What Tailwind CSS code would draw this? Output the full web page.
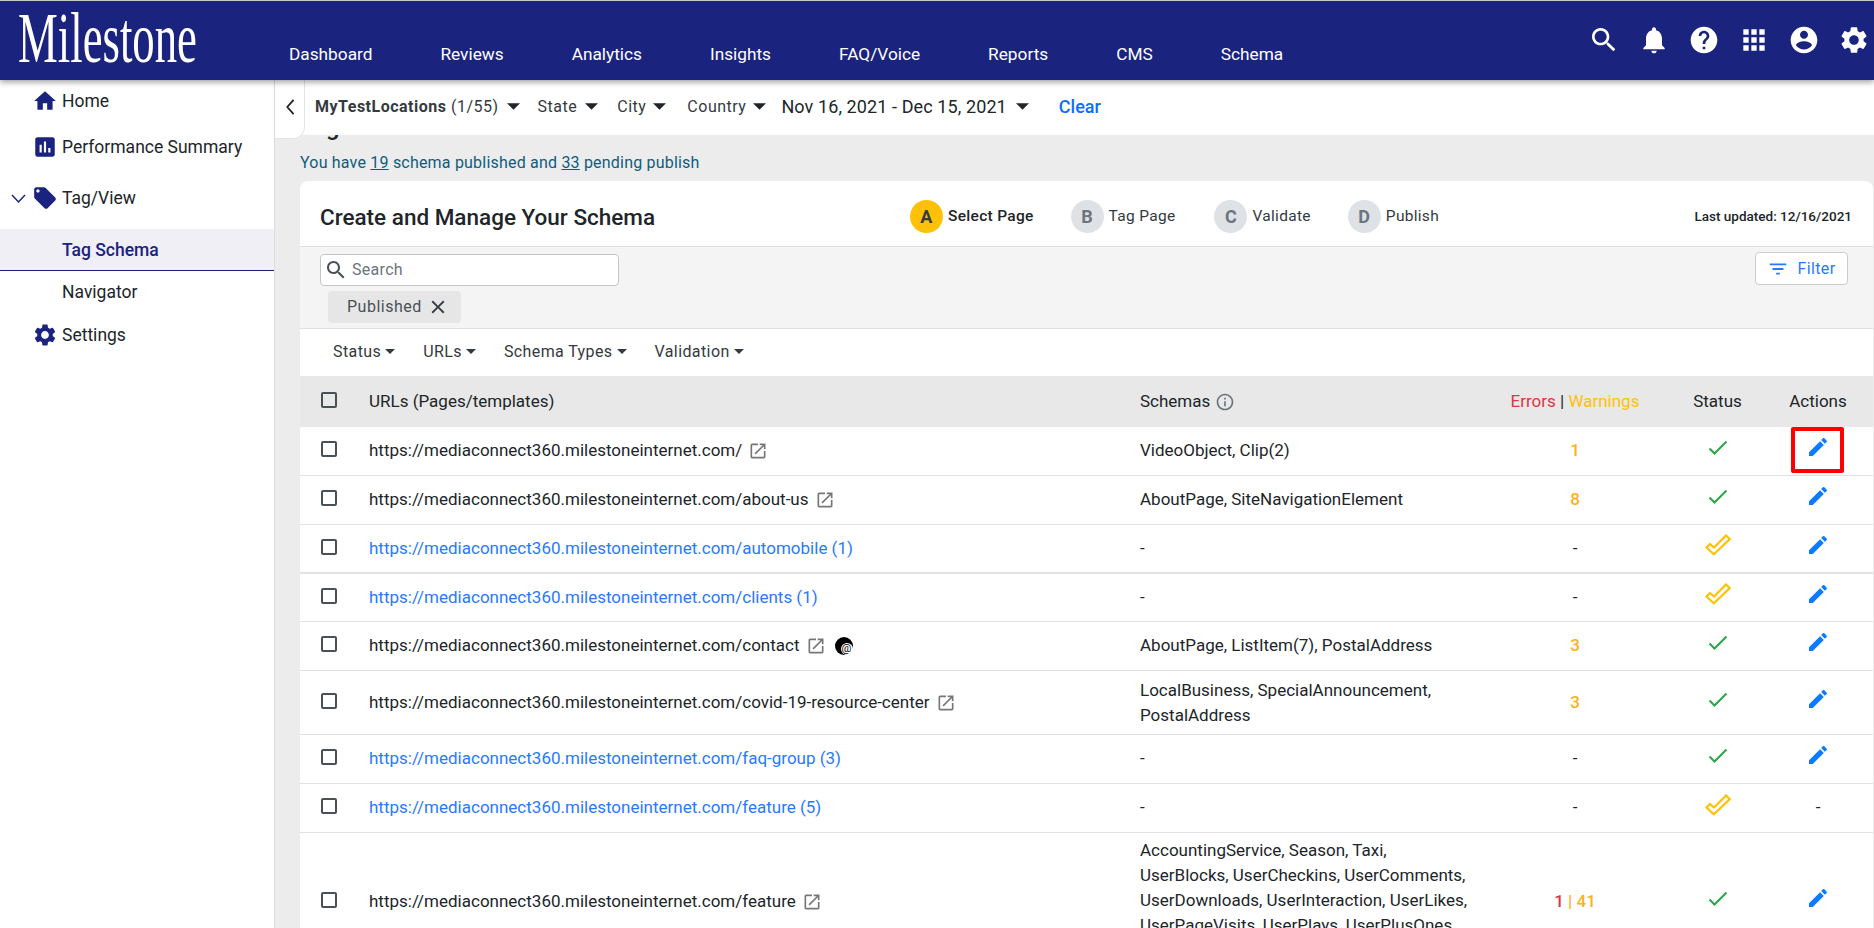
<!DOCTYPE html>
<html lang="en">
<head>
    <meta charset="UTF-8">
    <meta name="viewport" content="width=device-width, initial-scale=1.0">
    <title>Tag Schema</title>
    <script src="https://cdn.jsdelivr.net/npm/@tailwindcss/browser@4"></script>
</head>
<body class="h-screen overflow-hidden bg-white font-['Roboto',sans-serif] text-[#212529]">
    <!-- Icons used more than once -->
    <svg class="hidden">
        <symbol id="edit" viewBox="0 0 24 24"><path d="M3 17.25V21h3.75L17.81 9.94l-3.75-3.75L3 17.25zM20.71 7.04c.39-.39.39-1.02 0-1.41l-2.34-2.34c-.39-.39-1.02-.39-1.41 0l-1.83 1.83 3.75 3.75 1.83-1.83z"/></symbol>
        <symbol id="open" viewBox="0 0 24 24"><path d="M19 19H5V5h7V3H5c-1.11 0-2 .9-2 2v14c0 1.1.89 2 2 2h14c1.1 0 2-.9 2-2v-7h-2v7zM14 3v2h3.59l-9.83 9.83 1.41 1.41L19 6.41V10h2V3h-7z"/></symbol>
        <symbol id="check" viewBox="0 0 20 16"><path d="M1.5 8.5l5 5L18.5 1.5" fill="none" stroke="#28a745" stroke-width="2"/></symbol>
        <symbol id="doneall" viewBox="0 0 26 22"><path d="M1.5 13.5l3.5-3.5 4 3.5L21 1.5l3.8 3.6L8.8 20.3z" fill="none" stroke="#ffc107" stroke-width="2.2"/></symbol>
        <symbol id="caret" viewBox="0 0 10 5"><path d="M0 0h10L5 5z"/></symbol>
    </svg>

    <header class="h-[80px] bg-[#1a237e] border-t border-[#c9c9c9] flex items-start relative z-20 shadow-[0_2px_6px_rgba(0,0,0,0.4)]">
        <div class="w-[289px] shrink-0 pl-[18px] text-white font-['Liberation_Serif',serif] text-[71px] leading-[74px]">
            <span class="inline-block origin-left scale-x-[0.63]">Milestone</span>
        </div>
        <nav class="flex gap-[68px] pt-[42px] text-white text-[17.25px] leading-[22px]">
            <a>Dashboard</a>
            <a>Reviews</a>
            <a>Analytics</a>
            <a>Insights</a>
            <a>FAQ/Voice</a>
            <a>Reports</a>
            <a>CMS</a>
            <a>Schema</a>
        </nav>
        <div class="ml-auto flex gap-[18px] pt-[23px] pr-[4px] text-white fill-white">
            <svg class="w-[32px] h-[32px]" viewBox="0 0 24 24"><path d="M15.5 14h-.79l-.28-.27C15.41 12.59 16 11.11 16 9.5 16 5.91 13.09 3 9.5 3S3 5.91 3 9.5 5.91 16 9.5 16c1.61 0 3.09-.59 4.23-1.57l.27.28v.79l5 4.99L20.49 19l-4.99-5zm-6 0C7.01 14 5 11.99 5 9.5S7.01 5 9.5 5 14 7.01 14 9.5 11.99 14 9.5 14z"/></svg>
            <svg class="w-[32px] h-[32px]" viewBox="0 0 24 24"><path d="M12 22c1.1 0 2-.9 2-2h-4c0 1.1.89 2 2 2zm6-6v-5c0-3.07-1.64-5.64-4.5-6.32V4c0-.83-.67-1.5-1.5-1.5s-1.5.67-1.5 1.5v.68C7.63 5.36 6 7.92 6 11v5l-2 2v1h16v-1l-2-2z"/></svg>
            <svg class="w-[32px] h-[32px]" viewBox="0 0 24 24"><path d="M12 2C6.48 2 2 6.48 2 12s4.48 10 10 10 10-4.48 10-10S17.52 2 12 2zm1 17h-2v-2h2v2zm2.07-7.75l-.9.92C13.45 12.9 13 13.5 13 15h-2v-.5c0-1.1.45-2.1 1.17-2.83l1.24-1.26c.37-.36.59-.86.59-1.41 0-1.1-.9-2-2-2s-2 .9-2 2H8c0-2.21 1.79-4 4-4s4 1.79 4 4c0 .88-.36 1.68-.93 2.25z"/></svg>
            <svg class="w-[32px] h-[32px]" viewBox="0 0 24 24"><path d="M4 8h4V4H4v4zm6 12h4v-4h-4v4zm-6 0h4v-4H4v4zm0-6h4v-4H4v4zm6 0h4v-4h-4v4zm6-10v4h4V4h-4zm-6 4h4V4h-4v4zm6 6h4v-4h-4v4zm0 6h4v-4h-4v4z"/></svg>
            <svg class="w-[32px] h-[32px]" viewBox="0 0 24 24"><path d="M12 2C6.48 2 2 6.48 2 12s4.48 10 10 10 10-4.48 10-10S17.52 2 12 2zm0 3c1.66 0 3 1.34 3 3s-1.34 3-3 3-3-1.34-3-3 1.34-3 3-3zm0 14.2c-2.5 0-4.71-1.28-6-3.22.03-1.99 4-3.08 6-3.08 1.99 0 5.97 1.09 6 3.08-1.29 1.94-3.5 3.22-6 3.22z"/></svg>
            <svg class="w-[32px] h-[32px]" viewBox="0 0 24 24"><path d="M19.14 12.94c.04-.3.06-.61.06-.94 0-.32-.02-.64-.07-.94l2.03-1.58c.18-.14.23-.41.12-.61l-1.92-3.32c-.12-.22-.37-.29-.59-.22l-2.39.96c-.5-.38-1.03-.7-1.62-.94l-.36-2.54c-.04-.24-.24-.41-.48-.41h-3.84c-.24 0-.43.17-.47.41l-.36 2.54c-.59.24-1.13.57-1.62.94l-2.39-.96c-.22-.08-.47 0-.59.22L2.74 8.87c-.12.21-.08.47.12.61l2.03 1.58c-.05.3-.09.63-.09.94s.02.64.07.94l-2.03 1.58c-.18.14-.23.41-.12.61l1.92 3.32c.12.22.37.29.59.22l2.39-.96c.5.38 1.03.7 1.62.94l.36 2.54c.05.24.24.41.48.41h3.84c.24 0 .44-.17.47-.41l.36-2.54c.59-.24 1.13-.56 1.62-.94l2.39.96c.22.08.47 0 .59-.22l1.92-3.32c.12-.22.07-.47-.12-.61l-2.01-1.58zM12 15.6c-1.98 0-3.6-1.62-3.6-3.6s1.62-3.6 3.6-3.6 3.6 1.62 3.6 3.6-1.62 3.6-3.6 3.6z"/></svg>
        </div>
    </header>

    <div class="flex h-[848px]">
        <!-- Sidebar -->
        <aside class="w-[275px] shrink-0 bg-white border-r border-[#dcdcdc] text-[17.5px] leading-[24px] text-[#212529]">
            <div class="flex items-center h-[42px] pl-[32px] gap-[4px]">
                <svg class="w-[26px] h-[26px] fill-[#1a237e]" viewBox="0 0 24 24"><path d="M10 20v-6h4v6h5v-8h3L12 3 2 12h3v8z"/></svg>
                <span>Home</span>
            </div>
            <div class="flex items-center h-[42px] mt-[4px] pl-[32px] gap-[4px]">
                <svg class="w-[26px] h-[26px] fill-[#1a237e]" viewBox="0 0 24 24"><path d="M19 3H5c-1.1 0-2 .9-2 2v14c0 1.1.9 2 2 2h14c1.1 0 2-.9 2-2V5c0-1.1-.9-2-2-2zM9 17H7v-7h2v7zm4 0h-2V7h2v10zm4 0h-2v-4h2v4z"/></svg>
                <span>Performance Summary</span>
            </div>
            <div class="flex items-center h-[42px] mt-[9px] pl-[11px]">
                <svg class="w-[15px] h-[15px] fill-none stroke-[#1a237e] stroke-[1.5]" viewBox="0 0 15 15"><path d="M1 4l6.5 7L14 4"/></svg>
                <svg class="w-[26px] h-[26px] ml-[6px] mr-[4px] fill-[#1a237e]" viewBox="0 0 24 24"><path d="M21.41 11.58l-9-9C12.05 2.22 11.55 2 11 2H4c-1.1 0-2 .9-2 2v7c0 .55.22 1.05.59 1.42l9 9c.36.36.86.58 1.41.58.55 0 1.05-.22 1.41-.59l7-7c.37-.36.59-.86.59-1.41 0-.55-.23-1.06-.59-1.42zM5.5 7C4.67 7 4 6.33 4 5.5S4.67 4 5.5 4 7 4.67 7 5.5 6.33 7 5.5 7z"/></svg>
                <span>Tag/View</span>
            </div>
            <div class="flex items-center h-[42px] mt-[10px] pl-[62px] bg-[#f0eff5] border-b border-[#1a237e] text-[#1a237e] font-medium">Tag Schema</div>
            <div class="flex items-center h-[42px] pl-[62px]">Navigator</div>
            <div class="flex items-center h-[42px] mt-[1px] pl-[32px] gap-[4px]">
                <svg class="w-[26px] h-[26px] fill-[#1a237e]" viewBox="0 0 24 24"><path d="M19.14 12.94c.04-.3.06-.61.06-.94 0-.32-.02-.64-.07-.94l2.03-1.58c.18-.14.23-.41.12-.61l-1.92-3.32c-.12-.22-.37-.29-.59-.22l-2.39.96c-.5-.38-1.03-.7-1.62-.94l-.36-2.54c-.04-.24-.24-.41-.48-.41h-3.84c-.24 0-.43.17-.47.41l-.36 2.54c-.59.24-1.13.57-1.62.94l-2.39-.96c-.22-.08-.47 0-.59.22L2.74 8.87c-.12.21-.08.47.12.61l2.03 1.58c-.05.3-.09.63-.09.94s.02.64.07.94l-2.03 1.58c-.18.14-.23.41-.12.61l1.92 3.32c.12.22.37.29.59.22l2.39-.96c.5.38 1.03.7 1.62.94l.36 2.54c.05.24.24.41.48.41h3.84c.24 0 .44-.17.47-.41l.36-2.54c.59-.24 1.13-.56 1.62-.94l2.39.96c.22.08.47 0 .59-.22l1.92-3.32c.12-.22.07-.47-.12-.61l-2.01-1.58zM12 15.6c-1.98 0-3.6-1.62-3.6-3.6s1.62-3.6 3.6-3.6 3.6 1.62 3.6 3.6-1.62 3.6-3.6 3.6z"/></svg>
                <span>Settings</span>
            </div>
        </aside>

        <!-- Main -->
        <main class="flex-1 min-w-0 bg-[#ececec] overflow-hidden">
            <!-- Location / date filter bar -->
            <div class="relative z-10 h-[55px] bg-white flex items-start">
                <div class="w-[30px] h-[59px] shrink-0 bg-white border-r border-b border-[#e4e4e4] rounded-br-xl flex items-center justify-center pb-[4px]">
                    <svg class="w-[12px] h-[18px] fill-none stroke-[#212529] stroke-2" viewBox="0 0 12 20"><path d="M10 2L3 10l7 8"/></svg>
                </div>
                <div class="flex items-center h-[53px] pl-[10px] text-[16px] text-[#343a40] tracking-[0.5px]">
                    <span class="font-bold">MyTestLocations</span>&nbsp;<span>(1/55)</span>
                    <svg class="w-[13px] h-[7px] ml-[8px] mr-[18px] fill-[#212529]"><use href="#caret"/></svg>
                    <span>State</span>
                    <svg class="w-[13px] h-[7px] ml-[8px] mr-[19px] fill-[#212529]"><use href="#caret"/></svg>
                    <span>City</span>
                    <svg class="w-[13px] h-[7px] ml-[7px] mr-[21px] fill-[#212529]"><use href="#caret"/></svg>
                    <span>Country</span>
                    <svg class="w-[13px] h-[7px] ml-[7px] mr-[15px] fill-[#212529]"><use href="#caret"/></svg>
                    <span class="text-[18px] tracking-[0.1px] text-[#212529]">Nov 16, 2021 - Dec 15, 2021</span>
                    <svg class="w-[13px] h-[7px] ml-[9px] mr-[30px] fill-[#212529]"><use href="#caret"/></svg>
                    <span class="text-[#0d6efd] font-medium tracking-normal text-[18px]">Clear</span>
                </div>
            </div>

            <div class="pl-[25px] pr-[1px]">
                <h1 class="text-[24px] leading-[28px] -mt-[22px] font-medium text-[#212529]">Tag Schema</h1>
                <p class="mt-[11px] h-[29px] text-[16px] leading-[22px] text-[#0f5c7d] tracking-[0.2px]">You have <a class="underline">19</a> schema published and <a class="underline">33</a> pending publish</p>

                <!-- Card -->
                <section class="bg-white rounded-t-lg">
                    <div class="h-[66px] flex items-center border-b border-[#dfdfe8] pl-[20px] pr-[21px] pt-[6px]">
                        <h2 class="text-[22.5px] font-medium leading-[28px] w-[590px] shrink-0 text-[#212529]">Create and Manage Your Schema</h2>
                        <div class="flex items-center text-[15.5px] tracking-[0.3px] gap-[37px]">
                            <div class="flex items-center gap-[5px] font-medium">
                                <span class="w-[33px] h-[33px] rounded-full bg-[#ffc107] flex items-center justify-center text-[18px] text-[#343a40] font-bold">A</span>
                                <span>Select Page</span>
                            </div>
                            <div class="flex items-center gap-[5px] text-[#343a40]">
                                <span class="w-[33px] h-[33px] rounded-full bg-[#dee2e6] flex items-center justify-center text-[18px] text-[#6c757d] font-bold">B</span>
                                <span>Tag Page</span>
                            </div>
                            <div class="flex items-center gap-[5px] ml-[2px] text-[#343a40]">
                                <span class="w-[33px] h-[33px] rounded-full bg-[#dee2e6] flex items-center justify-center text-[18px] text-[#6c757d] font-bold">C</span>
                                <span>Validate</span>
                            </div>
                            <div class="flex items-center gap-[5px] text-[#343a40]">
                                <span class="w-[33px] h-[33px] rounded-full bg-[#dee2e6] flex items-center justify-center text-[18px] text-[#6c757d] font-bold">D</span>
                                <span>Publish</span>
                            </div>
                        </div>
                        <span class="ml-auto text-[13.5px] font-medium">Last updated: 12/16/2021</span>
                    </div>

                    <div class="h-[82px] bg-[#f4f4f4] border-b border-[#dfdfe8] relative pl-[20px] pt-[7px]">
                        <div class="w-[299px] h-[32px] bg-white border border-[#c4c4c4] rounded flex items-center pl-[3px] gap-[4px] text-[16px] text-[#6c757d] tracking-[0.3px]">
                            <svg class="w-[24px] h-[24px] fill-[#495057]" viewBox="0 0 24 24"><path d="M15.5 14h-.79l-.28-.27C15.41 12.59 16 11.11 16 9.5 16 5.91 13.09 3 9.5 3S3 5.91 3 9.5 5.91 16 9.5 16c1.61 0 3.09-.59 4.23-1.57l.27.28v.79l5 4.99L20.49 19l-4.99-5zm-6 0C7.01 14 5 11.99 5 9.5S7.01 5 9.5 5 14 7.01 14 9.5 11.99 14 9.5 14z"/></svg>
                            Search
                        </div>
                        <div class="mt-[5px] ml-[8px] w-[133px] h-[32px] bg-[#e6e6e6] rounded flex items-center pl-[19px] gap-[5px] text-[16px] text-[#495057] tracking-[0.5px]">
                            Published
                            <svg class="w-[22px] h-[22px] fill-[#343a40]" viewBox="0 0 24 24"><path d="M19 6.41L17.59 5 12 10.59 6.41 5 5 6.41 10.59 12 5 17.59 6.41 19 12 13.41 17.59 19 19 17.59 13.41 12 19 6.41z"/></svg>
                        </div>
                        <button class="absolute right-[25px] top-[5px] w-[93px] h-[33px] bg-white border border-[#ccc] rounded flex items-center justify-center gap-[8px] text-[16px] text-[#2979ff] tracking-[0.4px]">
                            <svg class="w-[22px] h-[22px] fill-[#2979ff]" viewBox="0 0 24 24"><path d="M10 18h4v-2h-4v2zM3 6v2h18V6H3zm3 7h12v-2H6v2z"/></svg>
                            Filter
                        </button>
                    </div>

                    <div class="h-[47px] bg-white flex items-center pl-[33px] pb-[2px] gap-[28px] text-[16px] text-[#343a40] tracking-[0.4px]">
                        <span class="flex items-center gap-[4px]">Status<svg class="w-[10px] h-[5px] fill-[#343a40]"><use href="#caret"/></svg></span>
                        <span class="flex items-center gap-[4px]">URLs<svg class="w-[10px] h-[5px] fill-[#343a40]"><use href="#caret"/></svg></span>
                        <span class="flex items-center gap-[4px]">Schema Types<svg class="w-[10px] h-[5px] fill-[#343a40]"><use href="#caret"/></svg></span>
                        <span class="flex items-center gap-[4px]">Validation<svg class="w-[10px] h-[5px] fill-[#343a40]"><use href="#caret"/></svg></span>
                    </div>

                    <!-- Table head -->
                    <div class="grid grid-cols-[69px_771px_350px_170px_115px_86px_1fr] items-center h-[51px] bg-[#e8e8e8] text-[17px]">
                        <span class="w-[16px] h-[16px] ml-[21px] -mt-[3px] border-2 border-[#495057] rounded-[2px]"></span>
                        <span>URLs (Pages/templates)</span>
                        <span class="flex items-center gap-[5px]">Schemas
                            <svg class="w-[20px] h-[20px] fill-[#6c757d]" viewBox="0 0 24 24"><path d="M11 7h2v2h-2zm0 4h2v6h-2zm1-9C6.48 2 2 6.48 2 12s4.48 10 10 10 10-4.48 10-10S17.52 2 12 2zm0 18c-4.41 0-8-3.59-8-8s3.59-8 8-8 8 3.59 8 8-3.59 8-8 8z"/></svg>
                        </span>
                        <span class="text-center"><span class="text-[#dc3545]">Errors</span> | <span class="text-[#ffc107]">Warnings</span></span>
                        <span class="text-center">Status</span>
                        <span class="text-center">Actions</span>
                    </div>

                    <!-- Rows -->
                    <div class="grid grid-cols-[69px_771px_350px_170px_115px_86px_1fr] items-center h-[49px] border-b border-[#e2e2e2] text-[17px]">
                        <span class="w-[16px] h-[16px] ml-[21px] -mt-[4px] border-2 border-[#495057] rounded-[2px]"></span>
                        <span class="flex items-center gap-[6px]">https://mediaconnect360.milestoneinternet.com/<svg class="w-[20px] h-[20px] fill-[#777]"><use href="#open"/></svg></span>
                        <span>VideoObject, Clip(2)</span>
                        <span class="text-center text-[#ffb020] font-medium">1</span>
                        <svg class="w-[20px] h-[16px] justify-self-center -mt-[6px]"><use href="#check"/></svg>
                        <span class="relative justify-self-center w-[24px] h-[24px] -mt-[8px]">
                            <svg class="w-[24px] h-[24px] fill-[#0d7bff]"><use href="#edit"/></svg>
                            <span class="absolute -left-[15px] -top-[8px] w-[53px] h-[46px] border-[4px] border-[#f00] rounded-[2px]"></span>
                        </span>
                    </div>
                    <div class="grid grid-cols-[69px_771px_350px_170px_115px_86px_1fr] items-center h-[49px] border-b border-[#e2e2e2] text-[17px]">
                        <span class="w-[16px] h-[16px] ml-[21px] -mt-[4px] border-2 border-[#495057] rounded-[2px]"></span>
                        <span class="flex items-center gap-[6px]">https://mediaconnect360.milestoneinternet.com/about-us<svg class="w-[20px] h-[20px] fill-[#777]"><use href="#open"/></svg></span>
                        <span>AboutPage, SiteNavigationElement</span>
                        <span class="text-center text-[#ffb020] font-medium">8</span>
                        <svg class="w-[20px] h-[16px] justify-self-center -mt-[6px]"><use href="#check"/></svg>
                        <svg class="w-[24px] h-[24px] justify-self-center -mt-[8px] fill-[#0d7bff]"><use href="#edit"/></svg>
                    </div>
                    <div class="grid grid-cols-[69px_771px_350px_170px_115px_86px_1fr] items-center h-[49px] border-b-2 border-[#e2e2e8] text-[17px]">
                        <span class="w-[16px] h-[16px] ml-[21px] -mt-[4px] border-2 border-[#495057] rounded-[2px]"></span>
                        <span class="text-[#2979ff]">https://mediaconnect360.milestoneinternet.com/automobile (1)</span>
                        <span>-</span>
                        <span class="text-center">-</span>
                        <svg class="w-[26px] h-[22px] justify-self-center -mt-[7px]"><use href="#doneall"/></svg>
                        <svg class="w-[24px] h-[24px] justify-self-center -mt-[8px] fill-[#0d7bff]"><use href="#edit"/></svg>
                    </div>
                    <div class="grid grid-cols-[69px_771px_350px_170px_115px_86px_1fr] items-center h-[48px] border-b border-[#e2e2e2] text-[17px]">
                        <span class="w-[16px] h-[16px] ml-[21px] -mt-[4px] border-2 border-[#495057] rounded-[2px]"></span>
                        <span class="text-[#2979ff]">https://mediaconnect360.milestoneinternet.com/clients (1)</span>
                        <span>-</span>
                        <span class="text-center">-</span>
                        <svg class="w-[26px] h-[22px] justify-self-center -mt-[7px]"><use href="#doneall"/></svg>
                        <svg class="w-[24px] h-[24px] justify-self-center -mt-[8px] fill-[#0d7bff]"><use href="#edit"/></svg>
                    </div>
                    <div class="grid grid-cols-[69px_771px_350px_170px_115px_86px_1fr] items-center h-[49px] border-b border-[#e2e2e2] text-[17px]">
                        <span class="w-[16px] h-[16px] ml-[21px] -mt-[4px] border-2 border-[#495057] rounded-[2px]"></span>
                        <span class="flex items-center gap-[6px]">https://mediaconnect360.milestoneinternet.com/contact<svg class="w-[20px] h-[20px] fill-[#777]"><use href="#open"/></svg>
                            <span class="relative w-[18px] h-[18px] ml-[3px] rounded-full bg-black">
                                <span class="absolute right-0 bottom-0 w-[12px] h-[12px] rounded-full bg-white text-black text-[11px] leading-[11px] text-center">@</span>
                            </span>
                        </span>
                        <span>AboutPage, ListItem(7), PostalAddress</span>
                        <span class="text-center text-[#ffb020] font-medium">3</span>
                        <svg class="w-[20px] h-[16px] justify-self-center -mt-[6px]"><use href="#check"/></svg>
                        <svg class="w-[24px] h-[24px] justify-self-center -mt-[8px] fill-[#0d7bff]"><use href="#edit"/></svg>
                    </div>
                    <div class="grid grid-cols-[69px_771px_350px_170px_115px_86px_1fr] items-center h-[64px] border-b border-[#e2e2e2] text-[17px]">
                        <span class="w-[16px] h-[16px] ml-[21px] -mt-[4px] border-2 border-[#495057] rounded-[2px]"></span>
                        <span class="flex items-center gap-[6px]">https://mediaconnect360.milestoneinternet.com/covid-19-resource-center<svg class="w-[20px] h-[20px] fill-[#777]"><use href="#open"/></svg></span>
                        <span class="leading-[25px]">LocalBusiness, SpecialAnnouncement,<br>PostalAddress</span>
                        <span class="text-center text-[#ffb020] font-medium">3</span>
                        <svg class="w-[20px] h-[16px] justify-self-center -mt-[6px]"><use href="#check"/></svg>
                        <svg class="w-[24px] h-[24px] justify-self-center -mt-[8px] fill-[#0d7bff]"><use href="#edit"/></svg>
                    </div>
                    <div class="grid grid-cols-[69px_771px_350px_170px_115px_86px_1fr] items-center h-[49px] border-b border-[#e2e2e2] text-[17px]">
                        <span class="w-[16px] h-[16px] ml-[21px] -mt-[4px] border-2 border-[#495057] rounded-[2px]"></span>
                        <span class="text-[#2979ff]">https://mediaconnect360.milestoneinternet.com/faq-group (3)</span>
                        <span>-</span>
                        <span class="text-center">-</span>
                        <svg class="w-[20px] h-[16px] justify-self-center -mt-[6px]"><use href="#check"/></svg>
                        <svg class="w-[24px] h-[24px] justify-self-center -mt-[8px] fill-[#0d7bff]"><use href="#edit"/></svg>
                    </div>
                    <div class="grid grid-cols-[69px_771px_350px_170px_115px_86px_1fr] items-center h-[49px] border-b border-[#e2e2e2] text-[17px]">
                        <span class="w-[16px] h-[16px] ml-[21px] -mt-[4px] border-2 border-[#495057] rounded-[2px]"></span>
                        <span class="text-[#2979ff]">https://mediaconnect360.milestoneinternet.com/feature (5)</span>
                        <span>-</span>
                        <span class="text-center">-</span>
                        <svg class="w-[26px] h-[22px] justify-self-center -mt-[7px]"><use href="#doneall"/></svg>
                        <span class="text-center">-</span>
                    </div>
                    <div class="grid grid-cols-[69px_771px_350px_170px_115px_86px_1fr] items-center h-[138px] text-[17px]">
                        <span class="w-[16px] h-[16px] ml-[21px] -mt-[4px] border-2 border-[#495057] rounded-[2px]"></span>
                        <span class="flex items-center gap-[6px]">https://mediaconnect360.milestoneinternet.com/feature<svg class="w-[20px] h-[20px] fill-[#777]"><use href="#open"/></svg></span>
                        <span class="self-start pt-[5px] leading-[25px]">AccountingService, Season, Taxi,<br>UserBlocks, UserCheckins, UserComments,<br>UserDownloads, UserInteraction, UserLikes,<br>UserPageVisits, UserPlays, UserPlusOnes,</span>
                        <span class="text-center font-medium"><span class="text-[#dc3545]">1</span> <span class="text-[#ffb020]">| 41</span></span>
                        <svg class="w-[20px] h-[16px] justify-self-center -mt-[6px]"><use href="#check"/></svg>
                        <svg class="w-[24px] h-[24px] justify-self-center -mt-[8px] fill-[#0d7bff]"><use href="#edit"/></svg>
                    </div>
                </section>
            </div>
        </main>
    </div>
</body>
</html>
